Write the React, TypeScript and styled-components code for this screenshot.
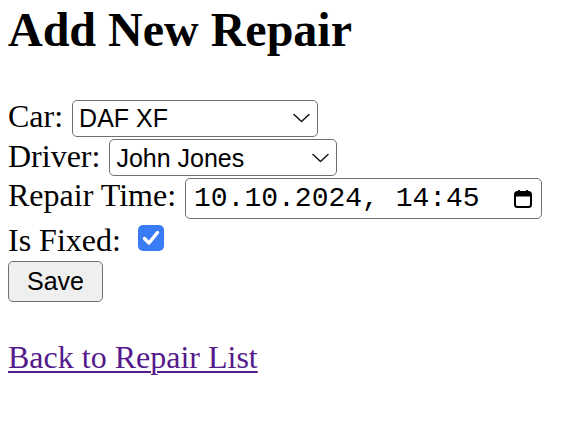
import React from 'react';
import styled, { createGlobalStyle } from 'styled-components';

const GlobalStyle = createGlobalStyle`
  body {
    margin: 0;
    padding: 3px 8px 8px;
    background: #ffffff;
    color: #000000;
    font-family: "Liberation Serif", "Times New Roman", serif;
    font-size: 32px;
  }
`;

function Chevron() {
  return (
    <svg width='17' height='9' viewBox='0 0 17 9' fill='none'>
      <path d='M1 1 L8.5 8 L16 1' stroke='#1a1a1a' strokeWidth='1.6' strokeLinecap='round' strokeLinejoin='round' />
    </svg>
  );
}

function CalendarIcon() {
  return (
    <svg width='20' height='20' viewBox='0 0 20 20' fill='none'>
      <rect x='2' y='3' width='16' height='15' rx='2.5' stroke='#000' strokeWidth='2' />
      <rect x='2' y='3' width='16' height='4.5' rx='1.5' fill='#000' />
      <path d='M6 1 V3.5 M14 1 V3.5' stroke='#000' strokeWidth='2' />
    </svg>
  );
}

function CheckMark() {
  return (
    <svg width='26' height='26' viewBox='0 0 26 26' fill='none'>
      <path d='M6.5 13.5 L11 18 L19.5 7.5' stroke='#ffffff' strokeWidth='3.4' strokeLinecap='round' strokeLinejoin='round' />
    </svg>
  );
}

function App() {
  const [fixed, setFixed] = React.useState(true);

  return (
    <>
      <GlobalStyle />
      <Title>Add New Repair</Title>
      <Form onSubmit={(e) => e.preventDefault()}>
        <Field $gap={9} $top={43}>
          <Label htmlFor='car'>Car:</Label>
          <SelectWrap>
            <Select id='car' $width={246} defaultValue='daf'>
              <option value='daf'>DAF XF</option>
              <option value='volvo'>Volvo FH</option>
              <option value='scania'>Scania R</option>
            </Select>
            <ArrowSlot>
              <Chevron />
            </ArrowSlot>
          </SelectWrap>
        </Field>
        <Field $gap={9} $top={2}>
          <Label htmlFor='driver'>Driver:</Label>
          <SelectWrap>
            <Select id='driver' $width={228} defaultValue='jj'>
              <option value='jj'>John Jones</option>
              <option value='ms'>Mark Smith</option>
            </Select>
            <ArrowSlot>
              <Chevron />
            </ArrowSlot>
          </SelectWrap>
        </Field>
        <Field $gap={9} $top={2}>
          <Label htmlFor='time'>Repair Time:</Label>
          <DateWrap>
            <DateInput id='time' type='text' readOnly value='10.10.2024, 14:45' />
            <IconSlot>
              <CalendarIcon />
            </IconSlot>
          </DateWrap>
        </Field>
        <Field $gap={17} $top={4}>
          <Label htmlFor='fixed'>Is Fixed:</Label>
          <CheckBox
            id='fixed'
            role='checkbox'
            aria-checked={fixed}
            $checked={fixed}
            onClick={() => setFixed(!fixed)}
          >
            {fixed && <CheckMark />}
          </CheckBox>
        </Field>
        <SaveButton type='submit'>Save</SaveButton>
      </Form>
      <Footer>
        <BackLink href='#'>Back to Repair List</BackLink>
      </Footer>
    </>
  );
}

export default App;

const Title = styled.h1({
  margin: 0,
  fontSize: 48,
  fontWeight: 700,
  lineHeight: '53px',
});

const Form = styled.form({
  display: 'flex',
  flexDirection: 'column',
  alignItems: 'flex-start',
  margin: 0,
});

const Field = styled.div<{ $gap: number; $top: number }>`
  display: flex;
  align-items: baseline;
  gap: ${(p) => p.$gap}px;
  margin-top: ${(p) => p.$top}px;
`;

const Label = styled.label({
  lineHeight: '35px',
});

const SelectWrap = styled.span({
  position: 'relative',
  display: 'inline-flex',
});

const Select = styled.select<{ $width: number }>`
  appearance: none;
  width: ${(p) => p.$width}px;
  height: 37px;
  margin: 0;
  padding: 0 34px 0 6px;
  border: 1px solid #6f6f6f;
  border-radius: 5px;
  background: #ffffff;
  color: #000000;
  font-family: "Liberation Sans", Arial, sans-serif;
  font-size: 25px;
`;

const ArrowSlot = styled.span({
  position: 'absolute',
  right: 8,
  top: '50%',
  transform: 'translateY(-50%)',
  display: 'flex',
  pointerEvents: 'none',
});

const DateWrap = styled.span({
  position: 'relative',
  display: 'inline-flex',
});

const DateInput = styled.input({
  width: 357,
  height: 41,
  boxSizing: 'border-box',
  margin: 0,
  padding: '0 40px 0 8px',
  border: '1px solid #6f6f6f',
  borderRadius: 5,
  background: '#ffffff',
  color: '#000000',
  fontFamily: '"Liberation Mono", "Courier New", monospace',
  fontSize: 28,
  outline: 'none',
});

const IconSlot = styled.span({
  position: 'absolute',
  right: 9,
  top: '50%',
  transform: 'translateY(-50%)',
  display: 'flex',
  pointerEvents: 'none',
});

const CheckBox = styled.span<{ $checked: boolean }>`
  display: inline-flex;
  width: 26px;
  height: 26px;
  border-radius: 5px;
  background: ${(p) => (p.$checked ? '#3a7cf5' : '#ffffff')};
  border: ${(p) => (p.$checked ? 'none' : '1px solid #767676')};
  box-sizing: border-box;
  cursor: pointer;
`;

const SaveButton = styled.button({
  marginTop: 3,
  height: 41,
  padding: '0 18px',
  border: '1px solid #6f6f6f',
  borderRadius: 5,
  background: '#efefef',
  color: '#000000',
  fontFamily: '"Liberation Sans", Arial, sans-serif',
  fontSize: 25,
  cursor: 'pointer',
});

const Footer = styled.div({
  marginTop: 38,
  lineHeight: '35px',
});

const BackLink = styled.a({
  color: '#551a8b',
  textDecorationLine: 'underline',
  textDecorationThickness: 2,
  textUnderlineOffset: 3,
});
